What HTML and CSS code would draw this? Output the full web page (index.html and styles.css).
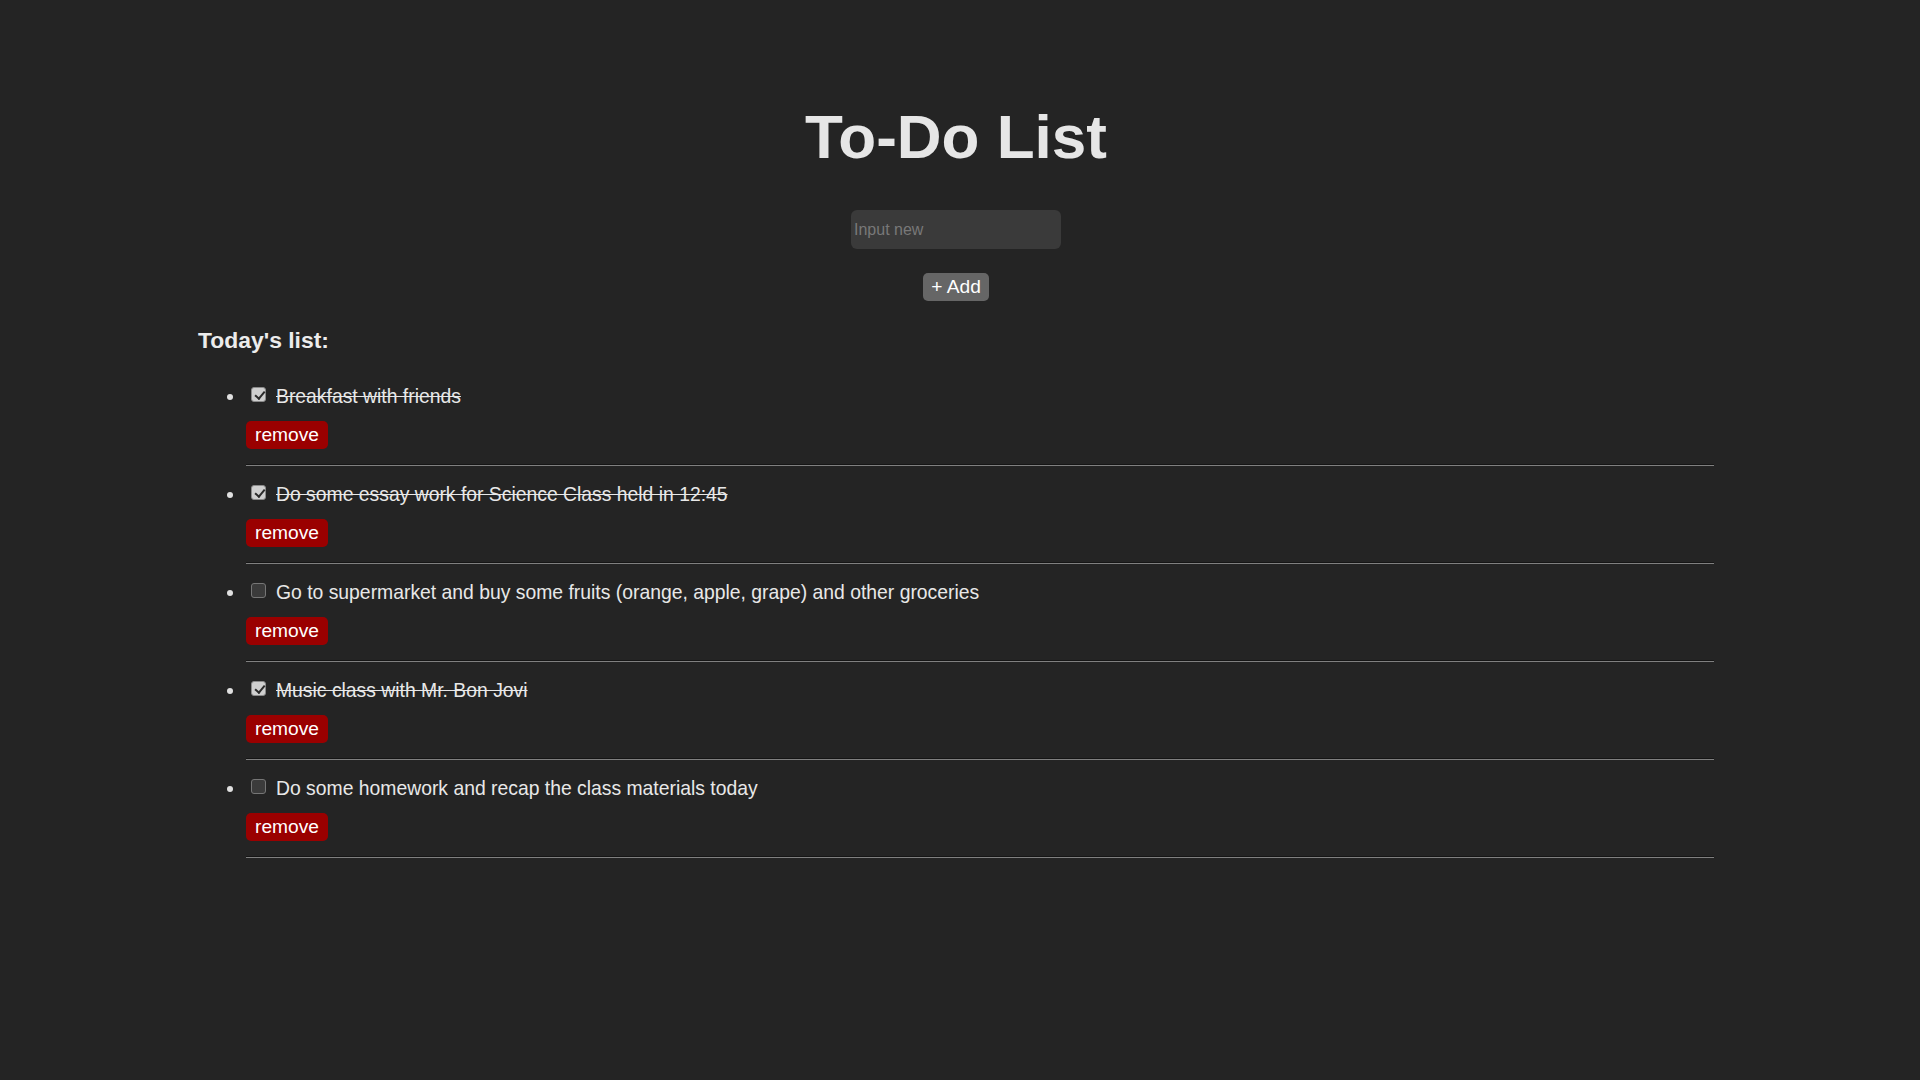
FILE: index.html
```html
<!DOCTYPE html>
<html lang="en">
<head>
<meta charset="utf-8">
<title>To-Do List</title>
<link rel="stylesheet" href="styles.css">
</head>
<body>
<div class="app">
  <header class="header">
    <h1 class="title">To-Do List</h1>
    <input class="new-input" type="text" placeholder="Input new">
    <button class="add-btn">+ Add</button>
  </header>
  <section class="list-section">
    <h3 class="list-title">Today's list:</h3>
    <ul class="todo-list">
      <li class="todo">
        <div class="todo-row"><span class="check checked"></span><span class="todo-text done">Breakfast with friends</span></div>
        <button class="remove-btn">remove</button>
        <div class="divider"></div>
      </li>
      <li class="todo">
        <div class="todo-row"><span class="check checked"></span><span class="todo-text done">Do some essay work for Science Class held in 12:45</span></div>
        <button class="remove-btn">remove</button>
        <div class="divider"></div>
      </li>
      <li class="todo">
        <div class="todo-row"><span class="check"></span><span class="todo-text">Go to supermarket and buy some fruits (orange, apple, grape) and other groceries</span></div>
        <button class="remove-btn">remove</button>
        <div class="divider"></div>
      </li>
      <li class="todo">
        <div class="todo-row"><span class="check checked"></span><span class="todo-text done">Music class with Mr. Bon Jovi</span></div>
        <button class="remove-btn">remove</button>
        <div class="divider"></div>
      </li>
      <li class="todo">
        <div class="todo-row"><span class="check"></span><span class="todo-text">Do some homework and recap the class materials today</span></div>
        <button class="remove-btn">remove</button>
        <div class="divider"></div>
      </li>
    </ul>
  </section>
</div>
</body>
</html>
```
FILE: styles.css
```css
html, body {
  margin: 0;
  padding: 0;
  background: #242424;
}

body {
  font-family: "Liberation Sans", Arial, sans-serif;
  color: #e8e8e8;
  min-height: 1080px;
}

.app {
  padding-top: 101px;
}

.header {
  display: flex;
  flex-direction: column;
  align-items: center;
  padding-right: 8px;
}

.title {
  margin: 0;
  font-size: 62px;
  line-height: 71px;
  font-weight: bold;
  color: #e6e6e6;
}

.new-input {
  margin-top: 38px;
  width: 210px;
  height: 39px;
  box-sizing: border-box;
  border: none;
  border-radius: 6px;
  background: #3a3a3a;
  padding: 0 3px;
  font-family: "Liberation Sans", Arial, sans-serif;
  font-size: 16px;
  color: #e8e8e8;
  outline: none;
}

.new-input::placeholder {
  color: #787878;
}

.add-btn {
  margin-top: 24px;
  height: 28px;
  padding: 0 8px;
  border: none;
  border-radius: 5px;
  background: #666666;
  color: #ffffff;
  font-family: "Liberation Sans", Arial, sans-serif;
  font-size: 19.2px;
  line-height: 22px;
}

.list-section {
  margin: 26px 206px 0 198px;
}

.list-title {
  margin: 0;
  font-size: 22.9px;
  line-height: 26px;
  font-weight: bold;
  color: #ececec;
}

.todo-list {
  margin: 32px 0 0 0;
  padding: 0 0 0 48px;
  list-style: disc;
  font-size: 19.35px;
  line-height: 22px;
}

.todo {
  color: #e8e8e8;
}

.todo::marker {
  color: #e0e0e0;
}

.todo-row {
  line-height: 22px;
  white-space: nowrap;
}

.check {
  display: inline-block;
  box-sizing: border-box;
  width: 15px;
  height: 15px;
  margin: 0 10px 0 5px;
  border: 1px solid #767676;
  border-radius: 3px;
  background: #3b3b3b;
  vertical-align: 1px;
  position: relative;
}

.check.checked {
  background: #cfcfcf;
  border-color: #8a8a8a;
}

.check.checked::after {
  content: "";
  position: absolute;
  left: 4.5px;
  top: 1px;
  width: 3.5px;
  height: 8px;
  border: solid #2a2a2a;
  border-width: 0 2px 2px 0;
  transform: rotate(40deg);
}

.todo-text.done {
  text-decoration: line-through;
}

.remove-btn {
  display: block;
  margin-top: 14px;
  height: 28px;
  padding: 0 9px;
  border: none;
  border-radius: 5px;
  background: #9a0000;
  color: #ffffff;
  font-family: "Liberation Sans", Arial, sans-serif;
  font-size: 19.2px;
  line-height: 22px;
}

.divider {
  margin: 15px 0 17px 0;
  height: 0;
  border-top: 1px solid #151515;
  border-bottom: 1px solid #808080;
}
```
